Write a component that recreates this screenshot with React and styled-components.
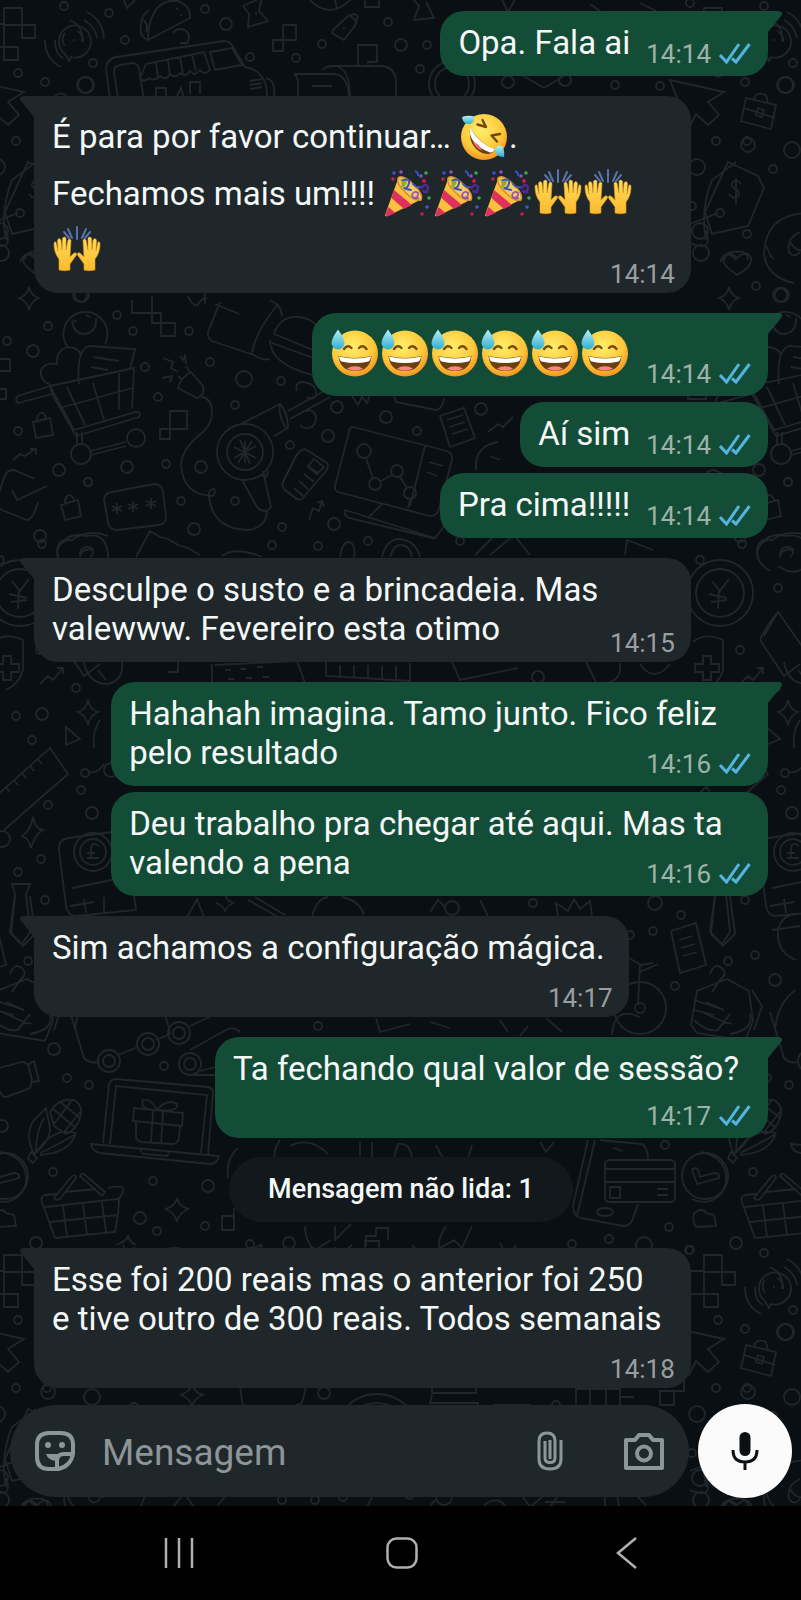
import React from 'react';
import styled, { createGlobalStyle } from 'styled-components';

const messages = [
  { id: 1, from: 'me', tail: true, time: '14:14', meta: 'row', text: 'Opa. Fala ai' },
  { id: 2, from: 'them', tail: true, time: '14:14', meta: 'overlap', emoji: true, text: ['É para por favor continuar… ', 'rofl', '. Fechamos mais um!!!! ', 'party', 'party', 'party', 'hands', 'hands', 'hands'] },
  { id: 3, from: 'me', tail: true, time: '14:14', meta: 'row', emoji: true, text: ['sweat', 'sweat', 'sweat', 'sweat', 'sweat', 'sweat'] },
  { id: 4, from: 'me', time: '14:14', meta: 'row', text: 'Aí sim' },
  { id: 5, from: 'me', time: '14:14', meta: 'row', text: 'Pra cima!!!!!' },
  { id: 6, from: 'them', tail: true, time: '14:15', meta: 'overlap', text: 'Desculpe o susto e a brincadeia. Mas valewww. Fevereiro esta otimo' },
  { id: 7, from: 'me', tail: true, time: '14:16', meta: 'overlap', text: 'Hahahah imagina. Tamo junto. Fico feliz pelo resultado' },
  { id: 8, from: 'me', time: '14:16', meta: 'overlap', text: 'Deu trabalho pra chegar até aqui. Mas ta valendo a pena' },
  { id: 9, from: 'them', tail: true, time: '14:17', meta: 'below', text: 'Sim achamos a configuração mágica.' },
  { id: 10, from: 'me', tail: true, time: '14:17', meta: 'below', text: 'Ta fechando qual valor de sessão?' },
];

const unread = [
  { id: 11, from: 'them', tail: true, time: '14:18', meta: 'below', text: 'Esse foi 200 reais mas o anterior foi 250 e tive outro de 300 reais. Todos semanais' },
];

/* ---------- emojis ---------- */

const SweatSmile = () => (
  <Emoji viewBox="0 0 50 50" role="img" aria-label="😅">
    <circle cx="25" cy="26.5" r="23" fill="url(#face)" />
    <path d="M14 22q3.500-5 7.500-1M29 21q4-4 7.500 1" fill="none" stroke="#7a4a0c" strokeWidth="2.400" strokeLinecap="round" />
    <path d="M8.500 29q16.500 4 33 0-1.500 15-16.500 15T8.500 29z" fill="#6b3f12" />
    <path d="M9 29.500q16 4 32 0-.5 4-2.500 5-13.500 3-27 0-2-1-2.500-5z" fill="#fff" />
    <path d="M17 41.500q8-4.500 16 0-8 4.500-16 0z" fill="#f58a7c" />
    <path d="M8 2.500q6.500 9 6.500 13.500a6.500 6.500 0 0 1-13 0Q1.500 11.500 8 2.500z" fill="url(#drop)" />
  </Emoji>
);

const Rofl = () => (
  <Emoji viewBox="0 0 50 50" role="img" aria-label="🤣">
    <circle cx="25" cy="27" r="23" fill="url(#face)" />
    <path d="M18.500 14.500l8.500 2.500-3.500-7M41 24l-8.500 1.500 5.500 6" fill="none" stroke="#74450c" strokeWidth="2.400" strokeLinecap="round" strokeLinejoin="round" />
    <path d="M11 18q9 15 25 22-4 6-13 3Q9 36 11 18z" fill="#6b3f12" />
    <path d="M11 17.500Q19 33 36 39.500q-2 3.500-5 3Q14 36 11 24z" fill="#fff" />
    <path d="M14 32q6 1 9 8.500-6-1.500-9-8.500z" fill="#f2685f" />
    <path d="M3 7q6-2 12-.5 1 6-4 7.500-7 1-8-7z" fill="url(#drop)" />
    <path d="M45 47q1-6-2-11-6-1-7 4 0 7 9 7z" fill="url(#drop)" />
  </Emoji>
);

const Party = () => (
  <Emoji viewBox="0 0 50 50" role="img" aria-label="🎉">
    <path d="M2 48L15 12q3-4 13 3 11 9 11 17L5 49q-3 1-3-1z" fill="#fdbf3f" />
    <path d="M11 23L29 38l-8 4L8.500 31zM5.500 40l7 6-7 3q-4 0-3-2z" fill="#e0305c" />
    <path d="M15 11q4-4 14 5 12 11 9 17-6 2-15-7-10-9-8-15z" fill="#f5ce62" stroke="#d88c24" strokeWidth="1.500" />
    <path d="M16 12q5 4 1 9 6 0 7-8z" fill="#8fa83c" />
    <path d="M20 13q7-2 6 3t-4 5 6 2M30 17q3 4 7 3" fill="none" stroke="#3f56b5" strokeWidth="2" strokeLinecap="round" />
    <path d="M30 31q6 0 5-5-4-3-6 2 1 5 7 3" fill="none" stroke="#9556b8" strokeWidth="1.800" />
    <path d="M38 22q4-7 7-2l-1 5q-3 1-4-2" fill="none" stroke="#522a98" strokeWidth="2.400" />
    <path d="M32 4q4 2 3 5" fill="none" stroke="#2f50ce" strokeWidth="2" />
    <g fill="#3d52d6"><circle cx="11" cy="6" r="1.800" /><circle cx="44" cy="40" r="1.800" /></g>
    <g fill="#c31c55"><circle cx="10" cy="12" r="1.800" /><circle cx="41" cy="14" r="2" /><circle cx="39" cy="47" r="1.800" /></g>
    <g fill="#35a94b"><circle cx="43" cy="6" r="1.800" /><circle cx="46" cy="31" r="1.800" /></g>
    <g fill="#8f4ad4"><circle cx="18" cy="5" r="1.800" /><circle cx="38" cy="9" r="1.800" /></g>
  </Emoji>
);

const Hands = () => (
  <Emoji viewBox="0 0 50 50" role="img" aria-label="🙌">
    <path d="M25 3v12M16 5l4 9M34 5l-4 9M12 8l5 6M38 8l-5 6" stroke="#5872ae" strokeWidth="2" strokeLinecap="round" />
    <g fill="url(#hand)" stroke="#e19a1d" strokeWidth=".6">
      <path d="M7 46V35Q2 29 2 20q0-3 2-2l2 9-.5-11q1.500-3 3.500 0l1 10 .5-12q2-2 3.500 0v12l2-10q2-2 3 .5L18 33l4-4q3-1 2.500 2L18 40v6q-5 1.500-11 0z" />
      <path d="M43 46V35q5-6 5-15 0-3-2-2l-2 9 .5-11q-1.500-3-3.500 0l-1 10-.5-12q-2-2-3.500 0v12l-2-10q-2-2-3 .5L32 33l-4-4q-3-1-2.500 2L32 40v6q5 1.500 11 0z" />
    </g>
  </Emoji>
);

const emojis = { sweat: SweatSmile, rofl: Rofl, party: Party, hands: Hands };

/* ---------- wallpaper ---------- */

const dots = [
  [64, 6, 4], [109, 13, 4], [125, 40, 4], [93, 63, 4], [18, 73, 4], [45, 82, 4], [85, 85, 8], [205, 9, 4], [226, 24, 6], [250, 57, 4],
  [296, 58, 4], [322, 44, 4], [388, 22, 4], [401, 45, 6], [427, 45, 4], [420, 69, 4], [508, 82, 6], [565, 80, 6], [615, 85, 4], [660, 86, 4],
  [690, 3, 4], [716, 141, 4], [748, 145, 7], [697, 167, 8], [773, 169, 4], [786, 85, 8], [701, 253, 8], [747, 234, 4], [756, 286, 4], [782, 295, 7],
  [80, 295, 7], [117, 315, 4], [48, 326, 4], [7, 341, 4], [33, 351, 6], [133, 331, 4], [189, 331, 4], [145, 367, 4], [158, 397, 4], [210, 362, 4],
  [244, 379, 8], [281, 381, 4], [235, 405, 4], [18, 431, 4], [337, 407, 6], [386, 417, 6], [417, 431, 4], [481, 409, 6], [328, 436, 6], [290, 445, 4],
  [59, 470, 6], [127, 467, 6], [166, 464, 4], [201, 467, 6], [88, 482, 4], [235, 501, 4], [181, 501, 4], [194, 529, 6], [282, 527, 4], [334, 524, 6],
  [40, 536, 6], [272, 545, 4], [318, 546, 4], [368, 541, 4], [460, 541, 4], [742, 544, 4], [788, 482, 4], [700, 560, 4], [778, 588, 4],
  [740, 650, 4], [538, 677, 6], [76, 688, 4], [16, 716, 4], [42, 714, 6], [32, 740, 4], [81, 790, 4], [48, 805, 4], [92, 813, 6], [2, 839, 8],
  [41, 859, 4], [18, 872, 4], [45, 900, 4], [533, 903, 4], [655, 903, 7], [681, 915, 4], [653, 931, 4], [630, 935, 4], [728, 961, 4], [755, 955, 4],
  [675, 986, 4], [775, 980, 6], [452, 908, 7], [54, 1049, 6], [67, 1078, 4], [89, 1085, 4], [164, 1066, 4], [318, 1026, 4], [2, 1126, 6],
  [53, 1172, 4], [153, 1181, 4], [208, 1186, 6], [140, 1218, 6], [157, 1231, 4], [205, 1226, 4], [36, 1243, 6], [665, 1145, 4], [669, 1227, 4],
  [609, 1239, 4], [572, 1244, 4], [289, 1243, 6], [250, 1244, 4], [644, 1245, 8], [689, 1250, 4], [134, 160, 4], [92, 150, 8], [324, 146, 6],
  [556, 158, 4], [47, 141, 4], [692, 206, 4], [700, 231, 8], [343, 250, 4], [282, 253, 4], [315, 253, 4], [444, 250, 8],
];

const Doodles = () => (
  <g id="doodles">
    {dots.map(([x, y, r]) => <circle key={`${x}-${y}`} cx={x} cy={y} r={r} />)}
    {/* blocks, voice bubble, taco */}
    <path d="M4 8h18v17H4zM22 25h13v13H22zM4 47h14v13H4zM-14 24H4M-14 47H4M4 25v22" />
    <path d="M65 54a16 16 0 1 1 6 3l-2 4zM65 46a10 10 0 0 1 0-13M77 31a10 10 0 0 1 6 11M74 39v2M55 40q0 14 8 18M45 40q0 19 16 27M84 20q11 6 13 18M87 12q16 8 17 27" />
    <path d="M148 40l42-22q1-12-12-17-18-2-25 14-5 10-5 25zM148 40q-9-3-7-15 0-10 8-15M143 20q6 4 3 12M177 8v2M181 14v2M123-2l4 10 8-8M173 33q4-6 12-3 7 6 2 13h-7" />
    {/* food truck */}
    <path d="M110 100l-4-32q1-9 10-11l108-16q6 0 9 6l12 20q22 4 22 28l-2 6M118 98l-4-26q0-6 6-7l12-2q6 0 7 6l5 31M210 52l22-4 10 17-27 5zM266 78q10 2 8 18M250 81l12-2M250 85l12-2M250 89l12-2" />
    <path d="M146 64l58-12 6 18q-6 6-10 0-5 7-10 1-4 7-10 2-5 6-10 1-4 7-10 2-6 6-11 2-5 5-9 0zM156 62l2 17M168 60l2 16M180 57l3 17M192 55l4 16M156 98v-10h10v8M176 98l5-10 3 10M190 94v-12h10v12" />
    <path d="M243 6l18-8M243 6l6 8-1 13 20-6-9-10 3-14M256 12v3M283 25h13v15h-13zM273 40h10v11h-10zM365-6h14v13h-14z" />
    <path d="M333 30l16-15 8 6-3 6-10 13-12-7zM350 17q4-6 8 0l-3 5M344 27v2M310 0q10 10 20 10t22-12M335 0l2 9" />
    <path d="M298 98V80l-3-6h40q14 2 14 26M312 86h20M322 70q4-4 12-4h48q14 2 14 16v18M338 67q12 3 12 32M358 65V45h19v17h-9v4M412-2l7 8-5 14 20-2-8-16" />
    <circle cx="452" cy="84" r="23" /><circle cx="452" cy="84" r="17" />
    {/* cursor, briefcase, tag, heart */}
    <path d="M670 80l54 12-16 10 11 13-11 10-12-11-7 14z" />
    <path d="M746 98l30 7-5 24-30-8zM754 99q2-8 12-4l2 8M744 108l31 10M758 108l6 2-2 7-6-2z" />
    <path d="M728 162l30 14 6 12-16 38-36 8-7-22zM690 224l28-11M741 184q-3-5-8-2-3 4 2 7 6 3 3 7-5 4-9-2M736 178v26" /><circle cx="720" cy="213" r="4" />
    <path d="M737 275q-15-10-14-17 5-9 14 0 10-9 14 0 2 8-14 17zM810 213q-44 0-46 40 2 24 30 30M800 232q-14 6-11 20 5 7 11 0" />
    <path d="M640 3l18 9M500-4l8 16 8-14M590 4l20 14M520 74l24 14 20-12M770 20q14 6 12 22" />
    <path d="M192 136q2 10 11 12-9 3-11 12-2-9-11-12 9-3 11-12zM729 287q2 9 10 11-8 3-10 12-2-9-10-12 8-2 10-11zM188 296q3 8 9 10 4-8 10-8" />
    {/* emoji, heart and book over the shopping cart */}
    <path d="M67 346a22 22 0 1 1 38-2M72 321q2 13 13 13 12-2 11-16M73 320l4 2M86 315l4 2M132 300v13h29v23h14v-13h-23v-27" />
    <path d="M53 386q-14-5-12-16 4-8 16-6-1-14 11-17 11 1 13 8M79 384q-3-34 10-38l46 3-5 20M93 357l26 4M91 367l17 3" />
    <path d="M50 386l-32 10q-4 4 0 7l34-9M50 386l24 44 62-18q6 0 3 5l-63 19-24-42zM50 386l84-18-2 40M67 387l18 38M93 383l11 37M119 373v36M60 408l72-20M77 432v14M82 432v13M91 451l35-9M91 455l35-9" />
    <circle cx="81" cy="454" r="10" /><circle cx="136" cy="438" r="9" />
    <path d="M33 422l17-4 3 17-17 3zM37 420q0-8 6-7 3 2 3 6M61 505l17-5 3 16-16 4zM65 503q0-8 5-8 4 2 4 6M13 460l7-6 5 2 10-7M30 449h6v6M170 411h17v18h-17zM160 429h10v10h-10zM-12 359h22v12h-22zM-12 389h18v10h-18z" />
    <path d="M35 479L14 470q-8 0-10 8l-8 24q0 6 6 8l25 10q6 0 11-18M12 490l5 10 30-14" />
    <path d="M112 492l42-8q8 0 9 8l3 25q0 7-7 8l-42 5q-8 0-9-8l-4-22q0-7 8-8zM117 503v11M112 506l10 5M122 506l-10 5M133 501v11M128 504l10 5M138 504l-10 5M151 498v11M146 501l10 5M156 501l-10 5" />
    {/* plug, cord and hair dryer */}
    <path d="M191 372l12 14q2 10-6 12l-19-10q2-10 13-16zM178 376l5 4M186 366l4 6M163 358l10 4-2 6 7 4M180 356l3 4 2-4 1 8M162 378l10-2-2 6M202 397q10 2 10 15 0 12-10 21-20 15-21 32 2 30 31 31 5-3 2-7-6 0-5 8 4 32 38 33 20-2 20-20" />
    <circle cx="245" cy="452" r="28" /><circle cx="245" cy="452" r="18" />
    <path d="M245 441v22M234 447l22 11M256 446l-22 12M240 440l10 24M252 441l-14 22M239 425l41-21q8 8 8 24l-14 8M280 404q-2 12 6 24M242 480l15 27q8 8 14 0l-8-36M262 475q4 6 6-4M288 411l36-20M290 419l40-22M297 391q-3-9 6-9 15 2 13 14-4 5-9 1M300 425q4 5 12 2 6-6 3-13-4-6-10-2" />
    <path d="M220 302l-12 30q-1 6 4 9l42 14q8 6 16 4M215 304l24 10M278 304q-24 30-26 50M270 300q12 6 12 16M274 334q6-18 24-17 16 2 18 10M274 334l44 18M270 340q0 24 42 35M272 343l44 16M205 292v12" />
    <path d="M305 449l22 14q2 4-1 8l-24 28q-4 2-8-2l-10-8q-3-4 0-9l12-24q4-6 9-7zM314 459l10 8-6 6-10-7zM308 467l10 8M304 474l10 8M299 481l9 8M294 488l9 8" />
    <path d="M309 520l4-12 6 3 3-10M317 503l5-2 2 6M353 427l94 24q6 3 5 9l-14 52q-3 4-8 4l-92-24q-4-2-3-6l14-54q0-5 4-5zM425 446l-15 60M429 462l14 4M427 472l10 4M345 510l90 28 14-18M345 510q-2 5 4 8l84 20M382 504l-14 14" />
    <circle cx="364" cy="451" r="7" /><circle cx="375" cy="484" r="6" /><circle cx="397" cy="471" r="6" /><circle cx="410" cy="493" r="6" />
    <path d="M366 458l7 20M381 481l11-6M400 477l7 11M410 500l-2 8M440 416l24-8 11 30-25 9zM447 420l16-5M449 427l16-5M452 434l16-5M488 432l10-8 5 3 10-10M498 442q-24 4-22 28M490 456l10 4M352 396l6 9 4-8 5 6 3-8M394 396l2 6 40 8q6 0 8-12" />
    <path d="M58 557q-4-14 8-18 8-6 20-3 22-4 22 22M80 557q0-8 14-8M136 557l14-26 10 6 8 2 10 6 10 3 12 7M222 556q14-10 40 1M340 557q2-14 8-15 8 0 6 16M382 557q4-18 18-18 16 2 20 18M390 557q4-12 10-12 10 0 12 12M475 555l20-20M490 555l24-20 16 20M625 555l2-15 26 10" />
    {/* coin, bow, pencil, shield, ruler */}
    <circle cx="720" cy="593" r="33" /><circle cx="720" cy="593" r="24" />
    <path d="M712 581l8 10 9-12M719 591l-1 18M709 594l18 4M711 602l16-2M770 571q-16-10-12-22 4-10 14-9 16-12 36-4M778 566q20 14 32-6M780 555q0-9 10-8 6 6 0 10M760 640q6-14 18-28l24 34M760 640l24 36 16-12M778 612l-14 24M693 642q12-10 30-2v30q-4 14-17 20M703 656h8v8h8v8h-8v8h-8v-8h-8v-8h8z" />
    <path d="M740 684l8-8 5 4 10-12M757 668h6v6M84 662q4 22 24 22 16-4 14-22M98 670l8 10M168 672h10v-12M212 682v-18M215 665l82-4 8 22M225 670h6M240 669h6M257 667h6M228 679h6M246 678h6M263 677h6M326 662v14l84 5v-18M340 665v12M354 665v13M368 665v14M382 666v13M396 666v14M452 662l8 18 58-12M586 662l10 20M620 663q2 18-14 20M640 664q14 20 30 0" />
    <path d="M88 700q2 10 10 12-8 3-10 13-2-10-10-13 8-2 10-12zM66 727l14 12-14 6zM-6 798l56-50 18 26-64 56M6 787l4 5M14 780l4 5M22 773l4 5M30 766l4 5M38 759l4 5M33 817q2 12 10 13-8 4-12 18-2-10-9-12 9-6 11-19zM100 720q-8 12-6 28M88 772q10 2 16-8" /><circle cx="111" cy="770" r="7" /><circle cx="85" cy="773" r="4" />
    <path d="M112 832l-44 6q-10 2-9 12l7 56q2 10 10 10l60-6-2-14M112 880l-40 8M84 899l2 14M104 897v15M99 846q-7-5-8 2v10h-4 12M87 853h8" /><circle cx="93" cy="852" r="19" /><circle cx="93" cy="852" r="13" />
    <path d="M12 884h18l-4 10 4 38-8 12-12-12 5-38zM715 896l-4 38 12 12 12-12-5-38M225 895q2 6 8 8-6 3-8 8-2-6-9-8M248 900l30 17M255 897l30 18M187 917l10-18 7 18M312 917q4-18 16-20M342 897q18 4 22 18M430 912l8-12 8 8M480 900l8 16M558 917l-2-14 12 8 6-12 6 10 10-8 2 16M770 906l24-4M772 930l28-4" />
    <path d="M671 931l25-8 10 42-26 8zM679 940l14-4M681 948l14-4M683 956l14-4M640 1017q-26-12-28 18M627 957l14 8 12-2M640 965l-2 40M640 972l18-8" /><circle cx="640" cy="1008" r="26" /><circle cx="640" cy="1008" r="5" />
    <path d="M707 987l20-8 22 12 4 30-8 20-48-8-6-8 6-34zM706 1002l18 8M702 1012l22 10M710 974q4-12 12-6 6 6-2 12l-8 12M752 990l10 16-8 24M796 960q-20-8-18-30 4-16 20-16M775 1030q2-26 20-40" />
    <path d="M-6 1000l30 10M-6 1010l20 5M-6 1020q12 12 24 10l12-16M30 1034q24-4 20-20M18 1030q4-10 14-6" />
    {/* nodes, camera, laptop with gift */}
    <path d="M70 1012l14 46q6 6 14 4M118 1055l20-8M156 1040l14-6q-2-12-6-20M190 1026l30-14M190 1050l36-20q8-4 14 2M200 1071l40-10M190 1075h26M376 1018l4 14 30-8M430 1022l20 6M500 1020l8 12M520 1036l8-10M546 1018l16 14" />
    {[[109, 1061], [148, 1044], [179, 1033], [190, 1064]].map(([x, y]) => <g key={x}><circle cx={x} cy={y} r="11" /><circle cx={x} cy={y} r="6" /></g>)}
    <path d="M-8 1070l30-8q6 0 7 6l3 12-2 8-24 9q-4 0-6-6M28 1065l6-4 5 20-6 1" />
    <path d="M103 1143l6-58q1-6 7-6l92 8q5 1 5 6l-5 62M110 1144l6-58 91 9-6 58M91 1144l128 12q-2 8-9 8l-110-11q-8-2-9-9zM140 1150l3 4 24 2 2-3" />
    <path d="M134 1108l49 5-1 13-49-5zM136 1122v14q0 5 6 6l30 2q6 0 7-6l1-12M153 1110l-2 33M163 1111l-2 33M157 1110q-18 0-14-10 8-2 14 10 10-12 20-6 2 8-20 6" />
    <path d="M34 1154q-10-20 0-34l12-12 4 20q0 14-14 24zM36 1152q0-20 8-34M36 1153q16-26 40-20-6 20-36 22M40 1153q14-6 34-18M31 1152l6 6-4 5-5-5zM50 1112q8-14 24-12 10 6 6 18-4 12-14 16l-12-8zM52 1108l24 20M60 1102l20 16M54 1124l18-24M64 1132l16-20" />
    <path d="M-8 1199a23 23 0 0 0 34-23q-2-20-26-24" />
    {/* basket, phone with card, clock */}
    <path d="M43 1205l12 33 60-6q4-20 4-34M43 1205q-4-8 2-10l12-1M66 1192l30-3M108 1188q18-4 15 4l-4 7-74 8M54 1198l18-22q4-2 4 2l-16 21q-4 2-6-1zM80 1176q2-4 5-1l20 17-3 4zM50 1222l68-7M63 1206l4 31M83 1204l4 31M102 1202l4 30M177 1198q2 9 12 11-10 3-12 13-2-10-12-13 10-2 12-11zM128 1235q1 7 8 10M128 1235q-1 7-12 10M222 1216h12v14h-12zM234 1216v-8M228 1178q-2-20 10-30M280 1140q-10 14-2 24M290 1146q20-10 38 8M360 1142v16M372 1142v16M394 1158l4-14q12-2 14 14M436 1145l4 8q10 20 28 6l4-14M540 1142l6 10 8-10M305 1226q0 16 10 24l16-10M335 1226v14l16-16M446 1226q-10 16-6 22l14-8 8 8 10-22M366 1246v-10h10v-8h12v12" />
    <path d="M588 1140l-15 66q0 10 8 12l42 8q8 0 10-8l5-14M595 1140l-18 76M613 1148l10 3M600 1140l42 4q6 4 6 16M609 1160h62q4 1 4 4v34q0 4-4 4h-62q-4-1-4-4v-34q0-3 4-4zM604 1169h71M604 1182h71M610 1187h10v11h-10zM657 1189h11M657 1195h11" /><ellipse cx="605" cy="1212" rx="8" ry="4" /><circle cx="705" cy="1176" r="23" />
    <path d="M692 1170q4-4 6 0l2 7 14-4q6 0 5 5l-22 6zM694 1213q8-6 12 0l8 2 2 11-20 1q-4-6-2-14" />
    {/* rows that show behind the composer */}
    <path d="M240 138q2 20 4 22M262 170l40-14 4-16M432 138v8h44v-8M432 148l-2 8h48v8h-40M494 164v-6h36v10M576 164v-22h44v20M590 142v20M606 142v20M620 150h14M660 158h14v-14h-14zM668 144h16v-10M636 168v-8h10v8" /><circle cx="377" cy="190" r="43" /><circle cx="377" cy="190" r="34" />
    <path d="M6 240q-6-30 6-60l24-18M-10 243q24 10 16-12M24 260q4-10 12-8 12-2 12 8M66 245q4 12 8 14M90 242q6 10 14 8M140 262l6-16M172 262l12-16 10 14M228 246l-10 12M366 262l6-12M402 246q10 12 12 0M430 262q2-8 6-8M484 258q14-10 22 2M520 246l10 14 12-10M545 255h20M560 246l-10 14M605 260v-14h12l2 14M638 250l8 8M720 262q6-14 16-2" />
  </g>
);

const Wallpaper = () => (
  <Backdrop aria-hidden="true">
    <defs>
      <radialGradient id="face" cx=".45" cy=".35" r=".7">
        <stop offset="0" stopColor="#ffee6b" />
        <stop offset=".65" stopColor="#fdc738" />
        <stop offset="1" stopColor="#f0871c" />
      </radialGradient>
      <linearGradient id="drop" x2="0" y2="1">
        <stop offset="0" stopColor="#b5f0f5" />
        <stop offset="1" stopColor="#2eaed0" />
      </linearGradient>
      <linearGradient id="hand" x2="0" y2="1">
        <stop offset="0" stopColor="#ffdc5c" />
        <stop offset="1" stopColor="#fcb92c" />
      </linearGradient>
    </defs>
    <Doodles />
    <use href="#doodles" x="700" />
    <use href="#doodles" x="-700" />
    <use href="#doodles" y="1247" />
    <use href="#doodles" x="700" y="1247" />
    <use href="#doodles" x="-700" y="1247" />
  </Backdrop>
);

/* ---------- chat ---------- */

const Ticks = () => (
  <svg width="32" height="21" viewBox="0 0 32 21" fill="none" stroke="#53b4de" strokeWidth="3" role="img" aria-label="Lida">
    <path d="M1 12l6.500 7L20 1M13 15.500l4 3.500L30.500 1" />
  </svg>
);

const Message = ({ from, tail, time, meta, emoji, text }) => (
  <Bubble $mine={from === 'me'} $tail={tail} $row={meta === 'row'}>
    {tail && (
      <Tail $mine={from === 'me'} viewBox="0 0 14 21" aria-hidden="true">
        <path d="M0 0h11q5 1 2 5L0 21z" />
      </Tail>
    )}
    <Text $mine={from === 'me'} $meta={meta} $emoji={emoji}>
      {[].concat(text).map((part, i) => {
        const Icon = emojis[part];
        return Icon ? <React.Fragment key={i}><Icon /><wbr /></React.Fragment> : part;
      })}
    </Text>
    <Meta $mine={from === 'me'} $meta={meta}>
      <time>{time}</time>
      {from === 'me' && <Ticks />}
    </Meta>
  </Bubble>
);

const App = () => (
  <>
    <GlobalStyle />
    <Screen>
      <Chat>
        <Wallpaper />
        <Messages>
          {messages.map(m => <Message key={m.id} {...m} />)}
          <UnreadPill>Mensagem não lida: 1</UnreadPill>
          {unread.map(m => <Message key={m.id} {...m} />)}
        </Messages>
        <Composer>
          <Field>
            <IconButton type="button" aria-label="Figurinhas">
              <svg width="40" height="40" viewBox="0 0 40 40" fill="none" stroke="currentColor" strokeWidth="4">
                <path d="M23 38q6-1 10-5t5-10v-9Q38 2 26 2H14Q2 2 2 14v12q0 12 12 12zM22 38v-8q0-7 7-7h9" />
                <circle cx="13" cy="14" r="3" fill="currentColor" stroke="none" />
                <circle cx="27" cy="14" r="3" fill="currentColor" stroke="none" />
                <path d="M11 23h13q-3 3-3 7-8-1-10-7z" fill="currentColor" stroke="none" />
              </svg>
            </IconButton>
            <Input type="text" placeholder="Mensagem" aria-label="Mensagem" />
            <IconButton type="button" aria-label="Anexar">
              <svg width="26" height="40" viewBox="0 0 26 40" fill="none" stroke="currentColor" strokeWidth="3">
                <path d="M24 9v19q0 10-11 10T2 28V10q0-8 8-8t8 8v17q0 4.500-5 4.500T8 27V10" />
                <path d="M13 9v19" />
              </svg>
            </IconButton>
            <IconButton type="button" aria-label="Câmera">
              <svg width="40" height="37" viewBox="0 0 40 37" fill="none" stroke="currentColor" strokeWidth="4" strokeLinejoin="round">
                <path d="M2 7h9l4-5h10l4 5h9v28H2z" />
                <circle cx="20" cy="20.500" r="7" />
              </svg>
            </IconButton>
          </Field>
          <MicButton type="button" aria-label="Gravar áudio">
            <svg width="28" height="38" viewBox="0 0 28 38" fill="none" stroke="#0b1014" strokeWidth="3">
              <rect x="8.500" y="0" width="11" height="24" rx="5.500" fill="#0b1014" stroke="none" />
              <path d="M2 18q0 12 12 12t12-12M14 30v8" />
            </svg>
          </MicButton>
        </Composer>
      </Chat>
      <SystemBar>
        <NavButton type="button" aria-label="Recentes">
          <svg width="32" height="32" viewBox="0 0 32 32"><path d="M3 1v30M16 1v30M29 1v30" /></svg>
        </NavButton>
        <NavButton type="button" aria-label="Início">
          <svg width="32" height="32" viewBox="0 0 32 32"><rect x="1.500" y="1.500" width="29" height="29" rx="9" /></svg>
        </NavButton>
        <NavButton type="button" aria-label="Voltar">
          <svg width="32" height="32" viewBox="0 0 32 32"><path d="M26 1L8 16l18 15" /></svg>
        </NavButton>
      </SystemBar>
    </Screen>
  </>
);

export default App;

const GlobalStyle = createGlobalStyle`
    body{
        margin: 0;
        background-color: #000;
        font-family: Roboto, sans-serif;
    }
    *{
        box-sizing: border-box;
    }
`;

const Screen = styled.div`
    display: flex;
    flex-direction: column;
    min-height: 100vh;
`;

const Chat = styled.main`
    position: relative;
    z-index: 0;
    flex: 1;
    display: flex;
    flex-direction: column;
    overflow: hidden;
    background-color: #0a0f13;
`;

const Backdrop = styled.svg`
    position: absolute;
    inset: 0;
    z-index: -1;
    width: 100%;
    height: 100%;
    fill: none;
    stroke: #20262a;
    stroke-width: 1.8;
`;

const Messages = styled.div`
    flex: 1;
    display: flex;
    flex-direction: column;
    gap: 6px;
    padding: 11px 33px 16px 34px;
`;

const Bubble = styled.article`
    position: relative;
    display: flex;
    flex-direction: ${props => props.$row ? 'row' : 'column'};
    align-items: flex-end;
    align-self: ${props => props.$mine ? 'flex-end' : 'flex-start'};
    max-width: 82vw;
    margin-top: ${props => props.$tail ? '14px' : '0'};
    padding: ${props => props.$mine ? '12px 17px 4px 18px' : '12px 16px 4px 18px'};
    border-radius: 24px;
    ${props => props.$tail && (props.$mine ? 'border-top-right-radius: 0;' : 'border-top-left-radius: 0;')}
    background-color: ${props => props.$mine ? '#144d37' : '#1f272a'};
    color: ${props => props.$mine ? '#144d37' : '#1f272a'};
    &:first-child{
        margin-top: 0;
    }
`;

const Tail = styled.svg`
    position: absolute;
    top: 0;
    ${props => props.$mine ? 'left: 100%;' : 'right: 100%; transform: scaleX(-1);'}
    width: 14px;
    height: 21px;
    fill: currentColor;
`;

const belowPadding = mine => mine ? '12px' : '8px';

const Text = styled.p`
    align-self: stretch;
    margin: 0;
    padding-right: ${props => props.$meta === 'below' ? belowPadding(props.$mine) : '0'};
    padding-bottom: ${props => props.$meta === 'row' ? '10px' : '0'};
    font-size: 33px;
    line-height: ${props => props.$emoji ? '57px' : '39px'};
    color: #f4f8f7;
`;

const Emoji = styled.svg`
    width: 50px;
    height: 50px;
    vertical-align: -12px;
`;

const metaMargin = {
  row: '0 0 0 16px',
  overlap: '-23px 0 0',
  below: '13px 0 0',
};

const Meta = styled.div`
    display: flex;
    align-items: ${props => props.$mine ? 'flex-start' : 'flex-end'};
    column-gap: 8px;
    height: 33px;
    margin: ${props => metaMargin[props.$meta]};
    font-size: 26px;
    line-height: 30px;
    color: ${props => props.$mine ? '#9db3a9' : '#999fa1'};
    svg{
        margin-top: 4px;
    }
`;

const UnreadPill = styled.div`
    align-self: center;
    margin: 13px 0 6px;
    padding: 13px 39px;
    border-radius: 33px;
    background-color: #12181b;
    font-size: 27px;
    font-weight: 500;
    line-height: 39px;
    color: #f4f8f7;
`;

const Composer = styled.form`
    display: flex;
    align-items: center;
    column-gap: 9px;
    padding: 0 9px 8px 10px;
`;

const Field = styled.div`
    flex: 1;
    min-width: 0;
    display: flex;
    align-items: center;
    height: 92px;
    padding: 0 25px;
    border-radius: 46px;
    background-color: #1f272a;
    color: #8c9598;
    button:last-child{
        margin-left: 61px;
    }
`;

const Input = styled.input`
    flex: 1;
    min-width: 0;
    margin-left: 27px;
    padding: 3px 0 0;
    border: 0;
    outline: 0;
    background: none;
    font-family: inherit;
    font-size: 37px;
    line-height: 44px;
    color: #f4f8f7;
    &::placeholder{
        color: #8c9598;
        opacity: 1;
    }
`;

const IconButton = styled.button`
    display: flex;
    padding: 0;
    border: 0;
    background: none;
    color: inherit;
    cursor: pointer;
`;

const MicButton = styled(IconButton)`
    flex-shrink: 0;
    align-items: center;
    justify-content: center;
    width: 94px;
    height: 94px;
    border-radius: 50%;
    background-color: #fbfbfb;
`;

const SystemBar = styled.nav`
    display: grid;
    grid-template-columns: repeat(3, 1fr);
    height: 94px;
    padding: 0 63px 0 67px;
    background-color: #000;
`;

const NavButton = styled(IconButton)`
    align-items: center;
    justify-content: center;
    svg{
        fill: none;
        stroke: #aeb0b1;
        stroke-width: 2.5;
    }
`;
